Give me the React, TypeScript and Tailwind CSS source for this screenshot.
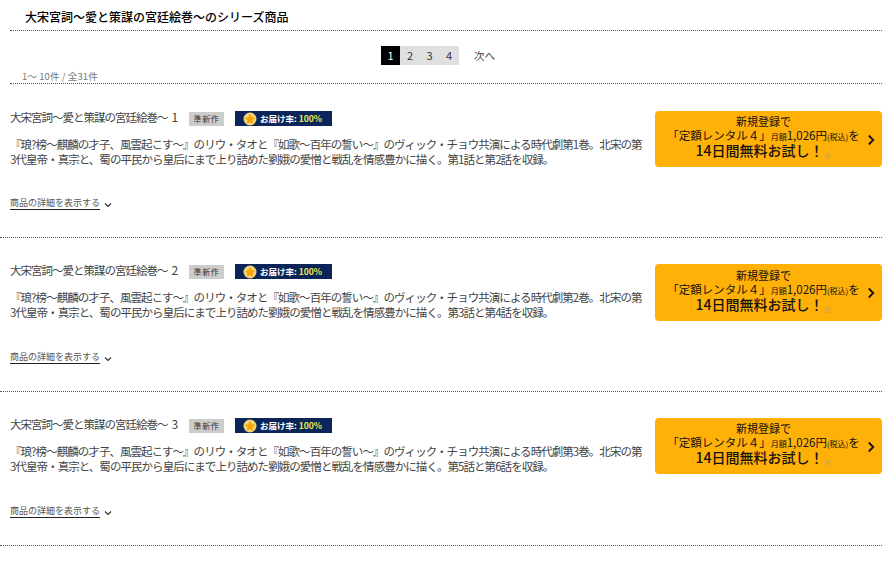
const font = { fontFamily: '"Noto Sans CJK JP", "Liberation Sans", sans-serif' }

const items = [
  { vol: '1', a: '1', b: '2', row: 'pt-[27px]', link: 'mt-[30px]', btn: 'h-[56px]' },
  { vol: '2', a: '3', b: '4', row: 'pt-[26px]', link: 'mt-[31px]', btn: 'h-[57px]' },
  { vol: '3', a: '5', b: '6', row: 'pt-[26px]', link: 'mt-[31px]', btn: 'h-[56px]' },
]

function Chevron({ className }: { className: string }) {
  return (
    <svg viewBox="0 0 10 16" className={className} fill="none" stroke="currentColor" strokeWidth="2.4">
      <path d="M2 2l6 6-6 6" />
    </svg>
  )
}

function Star() {
  return (
    <svg viewBox="0 0 14 14" className="w-[14px] h-[14px]">
      <circle cx="7" cy="7" r="6.5" fill="#f5d37a" />
      <path d="M7 1.8l1.6 3.5 3.7.4-2.8 2.5.8 3.7L7 10l-3.3 1.9.8-3.7-2.8-2.5 3.7-.4z" fill="#f7a600" />
    </svg>
  )
}

type ItemProps = { vol: string; a: string; b: string; row: string; link: string; btn: string }

function Item({ vol, a, b, row, link, btn }: ItemProps) {
  const desc = `『琅?榜～麒麟の才子、風雲起こす～』のリウ・タオと『如歌～百年の誓い～』のヴィック・チョウ共演による時代劇第${vol}巻。北宋の第3代皇帝・真宗と、蜀の平民から皇后にまで上り詰めた劉娥の愛憎と戦乱を情感豊かに描く。第${a}話と第${b}話を収録。`
  return (
    <div className={`h-[154px] border-b border-dotted border-[#555] flex pl-[10px] ${row}`}>
      <div className="w-[645px]">
        <div className="flex items-center h-[15px]">
          <span className="w-[169px] pb-[2px] text-[11.5px] tracking-[-1px] text-[#444] whitespace-nowrap">
            大宋宮詞～愛と策謀の宮廷絵巻～<span className="ml-[4px] text-[12px] tracking-normal">{vol}</span>
          </span>
          <span className="ml-[10px] w-[35px] h-[14px] bg-[#ccc] text-[8px] tracking-[0.7px] text-[#333] flex items-center justify-center">準新作</span>
          <span className="ml-[11px] w-[97px] h-[15px] bg-[#0b2559] flex items-center pl-[8px] gap-[3px]">
            <Star />
            <span className="text-[8.5px] text-white font-bold whitespace-nowrap">お届け率: <span className="text-[#eeea50]">100%</span></span>
          </span>
        </div>
        <p className="mt-[11px] w-[634px] text-[11.5px] tracking-[-0.95px] leading-[15px] text-[#444]">{desc}</p>
        <div className={`flex items-center gap-[4px] ${link}`}>
          <span className="text-[9px] leading-[12px] text-[#555] border-b border-[#222]">商品の詳細を表示する</span>
          <Chevron className="w-[6px] h-[8px] rotate-90 text-[#333] mt-[2px] ml-[1px]" />
        </div>
      </div>
      <button className={`w-[227px] bg-[#ffb108] rounded-[4px] relative text-[#111] flex flex-col items-center justify-center pr-[10px] pb-[4px] ${btn}`}>
        <span className="text-[11px] leading-[14px]">新規登録で</span>
        <span className="text-[11.5px] leading-[14px] whitespace-nowrap">「定額レンタル４」<span className="text-[8px]">月額</span>1,026円<span className="text-[8px]">(税込)</span>を</span>
        <span className="text-[14px] leading-[12px] font-medium whitespace-nowrap">14日間無料お試し！<span className="text-[8px] leading-none font-normal text-[#999] align-[-3px]">※</span></span>
        <Chevron className="absolute right-[7px] top-[23px] w-[8px] h-[12px]" />
      </button>
    </div>
  )
}

export default function App() {
  return (
    <div style={font} className="w-[896px] h-[562px] overflow-hidden bg-white pr-[14px]">
      <div className="ml-[10px] h-[31px] border-b border-dotted border-[#555] pl-[15px] pt-[8px] text-[12px] leading-[18px] font-medium text-black">
        大宋宮詞～愛と策謀の宮廷絵巻～のシリーズ商品
      </div>
      <div className="ml-[10px] h-[53px] border-b border-dotted border-[#555]">
        <div className="flex justify-center items-center pt-[15px] text-[11px] text-[#333]">
          <div className="flex ml-[-16px]">
            <span className="w-[19px] h-[19px] bg-black text-white flex items-center justify-center">1</span>
            <span className="w-[20px] h-[19px] bg-[#e0e0e0] flex items-center justify-center">2</span>
            <span className="w-[19px] h-[19px] bg-[#e0e0e0] flex items-center justify-center">3</span>
            <span className="w-[20px] h-[19px] bg-[#e0e0e0] flex items-center justify-center">4</span>
          </div>
          <span className="ml-[15px] text-[10.5px] text-[#444]">次へ</span>
        </div>
        <div className="pl-[12px] mt-[5px] text-[9.5px] leading-[12px] tracking-[0.1px] text-[#777]">1～ 10件 / 全31件</div>
      </div>
      <div className="w-[882px]">
        {items.map((it) => (
          <Item key={it.vol} {...it} />
        ))}
      </div>
    </div>
  )
}
